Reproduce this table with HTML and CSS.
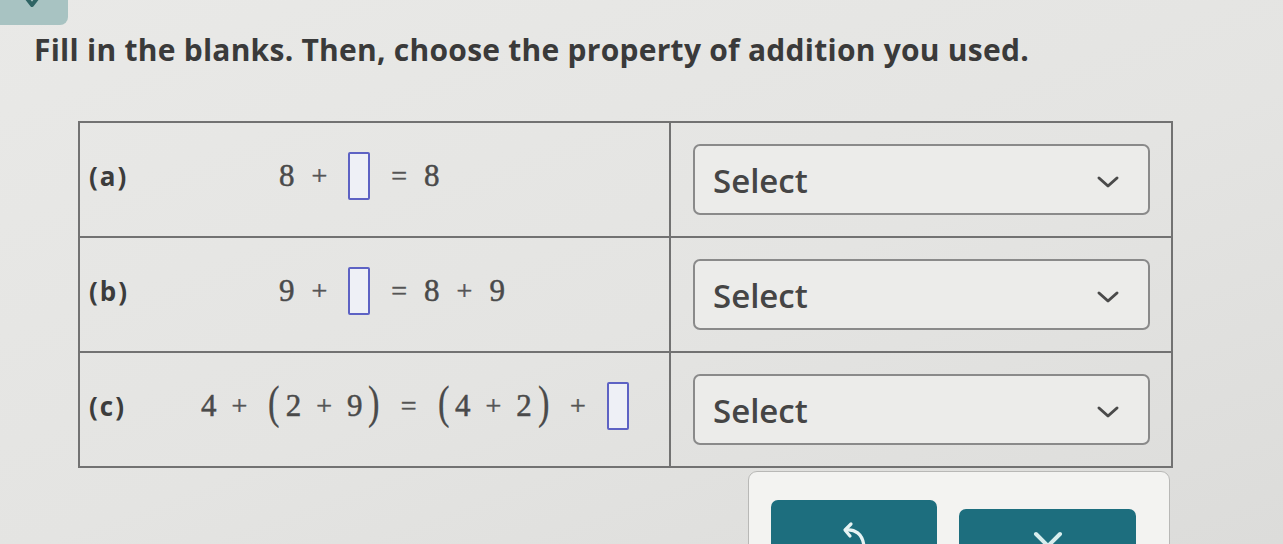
FILE: index.html
```html
<!DOCTYPE html>
<html>
<head>
<meta charset="utf-8">
<link rel="stylesheet" href="styles.css">
</head>
<body>
<div class="page">
  <div class="tab">
    <svg class="tab-chevron" width="16" height="8" viewBox="0 0 16 8"><path d="M1 -4 L8 5 L15 -4" fill="none" stroke="#2f6464" stroke-width="4" stroke-linecap="round" stroke-linejoin="round"/></svg>
  </div>
  <h1 class="title">Fill in the blanks. Then, choose the property of addition you used.</h1>

  <div class="table">
    <div class="row">
      <div class="cell-left">
        <span class="label">(a)</span>
        <div class="eq eq-short">
          <span class="n">8</span><span class="op">+</span><span class="blank"></span><span class="op">=</span><span class="n">8</span>
        </div>
      </div>
      <div class="cell-right">
        <div class="select"><span>Select</span>
          <svg class="chev" width="24" height="14" viewBox="0 0 24 14"><path d="M3 3 L12 11 L21 3" fill="none" stroke="#4a4a4a" stroke-width="3" stroke-linecap="round" stroke-linejoin="round"/></svg>
        </div>
      </div>
    </div>
    <div class="row">
      <div class="cell-left">
        <span class="label">(b)</span>
        <div class="eq eq-short">
          <span class="n">9</span><span class="op">+</span><span class="blank"></span><span class="op">=</span><span class="n">8</span><span class="op">+</span><span class="n">9</span>
        </div>
      </div>
      <div class="cell-right">
        <div class="select"><span>Select</span>
          <svg class="chev" width="24" height="14" viewBox="0 0 24 14"><path d="M3 3 L12 11 L21 3" fill="none" stroke="#4a4a4a" stroke-width="3" stroke-linecap="round" stroke-linejoin="round"/></svg>
        </div>
      </div>
    </div>
    <div class="row">
      <div class="cell-left">
        <span class="label">(c)</span>
        <div class="eq eq-long">
          <span class="n">4</span><span class="op">+</span><span class="paren">(</span><span class="n">2</span><span class="op">+</span><span class="n">9</span><span class="paren">)</span><span class="op">=</span><span class="paren">(</span><span class="n">4</span><span class="op">+</span><span class="n">2</span><span class="paren">)</span><span class="op">+</span><span class="blank"></span>
        </div>
      </div>
      <div class="cell-right">
        <div class="select"><span>Select</span>
          <svg class="chev" width="24" height="14" viewBox="0 0 24 14"><path d="M3 3 L12 11 L21 3" fill="none" stroke="#4a4a4a" stroke-width="3" stroke-linecap="round" stroke-linejoin="round"/></svg>
        </div>
      </div>
    </div>
  </div>

  <div class="panel-wrap">
    <div class="panel">
      <button class="btn btn-undo">
        <svg width="32" height="32" viewBox="0 0 32 32"><path d="M8 10 C16 9 25 13 26 27" fill="none" stroke="#e8f4f4" stroke-width="3.2" stroke-linecap="round"/><path d="M13 4 L7 10 L12 16" fill="none" stroke="#e8f4f4" stroke-width="3.2" stroke-linecap="round" stroke-linejoin="round"/></svg>
      </button>
      <button class="btn btn-clear">
        <svg width="34" height="34" viewBox="0 0 34 34"><path d="M5 5 L29 29 M29 5 L5 29" fill="none" stroke="#d8eeee" stroke-width="4" stroke-linecap="round"/></svg>
      </button>
    </div>
  </div>
</div>
</body>
</html>
```

FILE: styles.css
```css
html, body {
  margin: 0;
  padding: 0;
  height: 544px;
  overflow: hidden;
}
body {
  background: linear-gradient(160deg, #e9e9e7 0%, #e4e4e2 55%, #dcdcda 100%);
  font-family: "Open Sans", "Noto Sans", sans-serif;
  color: #3c3c3c;
}
.page {
  display: flex;
  flex-direction: column;
}
.tab {
  width: 68px;
  height: 25px;
  background: #a8c3c2;
  border-bottom-right-radius: 8px;
  display: flex;
  justify-content: center;
  align-items: flex-start;
}
.tab-chevron {
  margin-left: -4px;
  display: block;
}
.title {
  margin: 5px 0 0 34px;
  font-size: 30px;
  font-weight: 700;
  line-height: 40px;
  color: #3a3a3a;
  letter-spacing: 0.25px;
}
.table {
  margin: 51px 0 0 78px;
  width: 1095px;
  border: 2px solid #727272;
  box-sizing: border-box;
  display: flex;
  flex-direction: column;
}
.row {
  display: grid;
  grid-template-columns: 591px 1fr;
  height: 113px;
  border-top: 2px solid #727272;
}
.row:first-child {
  border-top: none;
}
.cell-left {
  border-right: 2px solid #727272;
  display: flex;
  align-items: center;
  padding-left: 9px;
  padding-bottom: 8px;
}
.label {
  font-weight: 700;
  font-size: 26px;
  letter-spacing: 2px;
  width: 112px;
  color: #3c3c3c;
}
.eq {
  display: flex;
  align-items: center;
  font-family: "Liberation Serif", "DejaVu Serif", serif;
  font-size: 31px;
  color: #4a4a4a;
  -webkit-text-stroke: 0.5px #4a4a4a;
}
.eq-short {
  margin-left: 78px;
}
.eq-long {
  margin-left: 0;
}
.n {
  display: inline-block;
}
.op {
  display: inline-block;
  margin: 0 15px;
  font-size: 28px;
  color: #555;
  -webkit-text-stroke: 0.5px #555;
}
.eq-short .op {
  margin: 0 17px;
}
.paren {
  display: inline-block;
  font-size: 46px;
  margin: -6px 4px 0;
  transform: scaleX(0.75);
  color: #4a4a4a;
  -webkit-text-stroke: 0.3px #4a4a4a;
}
.blank {
  display: inline-block;
  width: 18px;
  height: 44px;
  border: 2px solid #5d62c4;
  border-radius: 2px;
  background: #eef0f6;
  margin: 0 6px;
}
.eq-short .blank {
  margin: 0 4px;
}
.cell-right {
  display: flex;
  align-items: center;
  padding: 0 21px 0 22px;
}
.select {
  flex: 1;
  height: 71px;
  box-sizing: border-box;
  border: 2px solid #8a8a8a;
  border-radius: 7px;
  background: #ececea;
  display: flex;
  align-items: center;
  justify-content: space-between;
  padding: 0 28px 0 18px;
  font-size: 33px;
  font-weight: 600;
  color: #454545;
}
.select span {
  margin-top: 1px;
}
.chev {
  display: block;
  margin-top: 4px;
}
.panel-wrap {
  display: flex;
  padding-left: 748px;
  margin-top: 3px;
}
.panel {
  width: 422px;
  height: 100px;
  box-sizing: border-box;
  background: #f3f3f1;
  border: 1px solid #b8b8b6;
  border-radius: 9px 9px 0 0;
  display: flex;
  align-items: flex-start;
  gap: 22px;
  padding: 28px 0 0 22px;
}
.btn {
  border: none;
  border-radius: 7px;
  background: #1d6e7e;
  height: 70px;
  display: flex;
  justify-content: center;
  align-items: flex-start;
  padding: 20px 0 0;
}
.btn-undo {
  width: 166px;
}
.btn-clear {
  width: 177px;
  margin-top: 9px;
  padding-top: 20px;
}
.btn svg {
  display: block;
}
```
